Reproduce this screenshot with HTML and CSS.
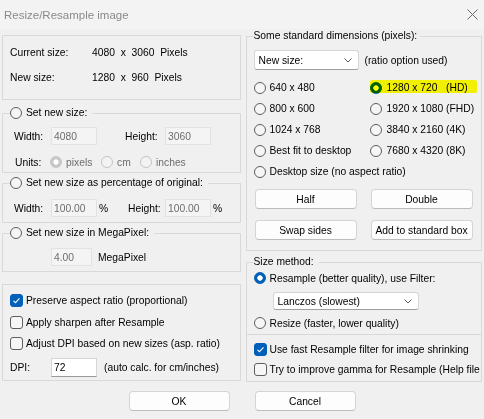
FILE: index.html
```html
<!DOCTYPE html>
<html lang="en">
<head>
    <meta charset="UTF-8">
    <title>Resize/Resample image</title>
    <link rel="stylesheet" href="styles.css">
</head>
<body>
    <div class="dialog">
        <div class="titlebar">
            <span class="title">Resize/Resample image</span>
            <svg class="close" width="11" height="11" viewBox="0 0 11 11">
                <path d="M0.5 0.5 L10.5 10.5 M10.5 0.5 L0.5 10.5" stroke="#6b6b6b" stroke-width="1" fill="none"/>
            </svg>
        </div>

        <div class="content">
            <div class="col-left">
                <div class="panel info">
                    <div class="info-row"><span class="info-label">Current size:</span><span class="info-value">4080  x  3060  Pixels</span></div>
                    <div class="info-row"><span class="info-label">New size:</span><span class="info-value">1280  x  960  Pixels</span></div>
                </div>

                <fieldset class="group g-size">
                    <legend><span class="opt"><span class="radio"></span>Set new size:</span></legend>
                    <div class="row field-row">
                        <span class="lbl w-37">Width:</span>
                        <input class="field" type="text" value="4080" disabled>
                        <span class="lbl ml-28 w-40">Height:</span>
                        <input class="field" type="text" value="3060" disabled>
                    </div>
                    <div class="row units-row">
                        <span class="lbl w-35">Units:</span>
                        <span class="opt dis w-51"><span class="radio dis-on"></span>pixels</span>
                        <span class="opt dis w-39"><span class="radio dis"></span>cm</span>
                        <span class="opt dis"><span class="radio dis"></span>inches</span>
                    </div>
                </fieldset>

                <fieldset class="group g-percent">
                    <legend><span class="opt"><span class="radio"></span>Set new size as percentage of original:</span></legend>
                    <div class="row field-row">
                        <span class="lbl w-37">Width:</span>
                        <input class="field" type="text" value="100.00" disabled>
                        <span class="lbl unit">%</span>
                        <span class="lbl w-37">Height:</span>
                        <input class="field" type="text" value="100.00" disabled>
                        <span class="lbl pct">%</span>
                    </div>
                </fieldset>

                <fieldset class="group g-mega">
                    <legend><span class="opt"><span class="radio"></span>Set new size in MegaPixel:</span></legend>
                    <div class="row mega-row">
                        <input class="field short" type="text" value="4.00" disabled>
                        <span class="lbl">MegaPixel</span>
                    </div>
                </fieldset>

                <div class="panel options">
                    <div class="row check-row"><span class="check on"><svg width="11" height="11" viewBox="0 0 11 11"><path d="M2.5 5.8 L4.5 7.7 L8.5 3.4" stroke="#fff" stroke-width="1.1" fill="none"/></svg></span>Preserve aspect ratio (proportional)</div>
                    <div class="row check-row"><span class="check"></span>Apply sharpen after Resample</div>
                    <div class="row check-row"><span class="check"></span>Adjust DPI based on new sizes (asp. ratio)</div>
                    <div class="row dpi-row">
                        <span class="lbl w-41">DPI:</span>
                        <input class="field live" type="text" value="72">
                        <span class="lbl hint">(auto calc. for cm/inches)</span>
                    </div>
                </div>
            </div>

            <div class="col-right">
                <fieldset class="group g-std">
                    <legend>Some standard dimensions (pixels):</legend>
                    <div class="row select-row">
                        <div class="select new-size">New size:<svg width="8" height="5" viewBox="0 0 8 5"><path d="M0.5 0.5 L4 4 L7.5 0.5" stroke="#5a5a5a" fill="none"/></svg></div>
                        <span class="lbl">(ratio option used)</span>
                    </div>
                    <div class="dims">
                        <span class="opt"><span class="radio"></span>640 x 480</span>
                        <span class="opt col2 marked"><span class="radio on"></span>1280 x 720 &nbsp; (HD)<span class="marker"></span></span>
                        <span class="opt"><span class="radio"></span>800 x 600</span>
                        <span class="opt col2"><span class="radio"></span>1920 x 1080 (FHD)</span>
                        <span class="opt"><span class="radio"></span>1024 x 768</span>
                        <span class="opt col2"><span class="radio"></span>3840 x 2160 (4K)</span>
                        <span class="opt"><span class="radio"></span>Best fit to desktop</span>
                        <span class="opt col2"><span class="radio"></span>7680 x 4320 (8K)</span>
                        <span class="opt wide"><span class="radio"></span>Desktop size (no aspect ratio)</span>
                    </div>
                    <div class="btn-grid">
                        <button class="btn">Half</button>
                        <button class="btn">Double</button>
                        <button class="btn">Swap sides</button>
                        <button class="btn">Add to standard box</button>
                    </div>
                </fieldset>

                <fieldset class="group g-method">
                    <legend>Size method:</legend>
                    <div class="row method-row"><span class="opt"><span class="radio on"></span>Resample (better quality), use Filter:</span></div>
                    <div class="select filter">Lanczos (slowest)<svg width="8" height="5" viewBox="0 0 8 5"><path d="M0.5 0.5 L4 4 L7.5 0.5" stroke="#5a5a5a" fill="none"/></svg></div>
                    <div class="row method-row resize"><span class="opt"><span class="radio"></span>Resize (faster, lower quality)</span></div>
                    <div class="separator"></div>
                    <div class="row check-row fast"><span class="check on"><svg width="11" height="11" viewBox="0 0 11 11"><path d="M2.5 5.8 L4.5 7.7 L8.5 3.4" stroke="#fff" stroke-width="1.1" fill="none"/></svg></span>Use fast Resample filter for image shrinking</div>
                    <div class="row check-row gamma"><span class="check"></span>Try to improve gamma for Resample (Help file</div>
                </fieldset>
            </div>
        </div>

        <div class="actions">
            <button class="btn action">OK</button>
            <button class="btn action">Cancel</button>
        </div>
    </div>
</body>
</html>
```

FILE: styles.css
```css
body {
    margin: 0;
    background-color: #f0f0f0;
    font-family: "Liberation Sans", Arial, sans-serif;
    font-size: 10.3px;
    color: #000;
    overflow: hidden;
}

.dialog {
    width: 484px;
    height: 419px;
    display: flex;
    flex-direction: column;
}

.titlebar {
    height: 29px;
    flex: none;
    display: flex;
    align-items: center;
    justify-content: space-between;
    padding: 0 6px 0 4px;
    background-color: #f3f3f3;
}

.title {
    color: #8a8a8a;
    font-size: 11.5px;
}

.content {
    display: flex;
    gap: 5px;
    padding: 0 2px;
}

.col-left {
    width: 239px;
    display: flex;
    flex-direction: column;
}

.col-right {
    width: 237px;
    display: flex;
    flex-direction: column;
}

/* boxes and group boxes */
.panel {
    border: 1px solid #d9d9d9;
}

.group {
    border: 1px solid #d9d9d9;
    margin: 0;
    padding: 0 0 0 7px;
    min-width: 0;
}

.group legend {
    padding: 0 5px 0 0;
    height: 16px;
    line-height: 16px;
}

.row {
    display: flex;
    align-items: center;
    height: 16px;
}

.lbl {
    flex: none;
    white-space: nowrap;
}

.opt {
    display: inline-flex;
    align-items: center;
    gap: 4px;
    white-space: nowrap;
}

.opt.dis {
    color: #6d6d6d;
}

/* info box */
.info {
    margin-top: 6px;
    padding: 8px 0 14px 7px;
    display: flex;
    flex-direction: column;
    gap: 9px;
}

.info-row {
    display: flex;
    height: 16px;
    align-items: center;
}

.info-label {
    width: 82px;
}

.info-value {
    white-space: pre;
}

/* left groups */
.g-size {
    margin-top: 5px;
    padding-top: 6px;
    padding-bottom: 2px;
}

.g-percent {
    margin-top: 2px;
    padding-top: 8px;
    padding-bottom: 5px;
}

.g-mega {
    margin-top: 2px;
    padding-top: 7px;
    padding-bottom: 5px;
}

.field-row {
    height: 18px;
    padding-left: 4px;
}

.units-row {
    margin-top: 9px;
    padding-left: 5px;
}

.mega-row {
    height: 18px;
    padding-left: 41px;
    gap: 6px;
}

.w-35 { width: 35px; }
.w-37 { width: 37px; }
.w-39 { width: 39px; }
.w-40 { width: 40px; }
.w-41 { width: 41px; }
.w-51 { width: 51px; }
.ml-28 { margin-left: 28px; }

.unit {
    margin-left: 2px;
    width: 29px;
}

.pct {
    margin-left: 2px;
}

.field {
    width: 46px;
    height: 18px;
    box-sizing: border-box;
    margin: 0;
    padding: 0 2px;
    border: 1px solid #e2e2e2;
    background-color: #f4f4f4;
    color: #6d6d6d;
    font: inherit;
    flex: none;
}

.field.short {
    width: 41px;
}

.field.live {
    height: 19px;
    background-color: #fff;
    color: #000;
    border-color: #d6d6d6;
    border-bottom-color: #9a9a9a;
}

/* radios and checks */
.radio {
    width: 12px;
    height: 12px;
    box-sizing: border-box;
    border-radius: 50%;
    border: 1px solid #5e5e5e;
    background-color: #f6f6f6;
    flex: none;
}

.radio.on {
    border-color: #005fb8;
    background: radial-gradient(circle, #fff 0 2.4px, #005fb8 3px);
}

.radio.dis {
    border-color: #c4c4c4;
    background-color: #f3f3f3;
}

.radio.dis-on {
    border-color: #c6c6c6;
    background: radial-gradient(circle, #fff 0 2.4px, #c6c6c6 3px);
}

.check {
    width: 13px;
    height: 13px;
    box-sizing: border-box;
    border: 1px solid #5e5e5e;
    border-radius: 3px;
    background-color: #f6f6f6;
    margin-right: 3px;
    display: flex;
    align-items: center;
    justify-content: center;
    flex: none;
}

.check.on {
    background-color: #005fb8;
    border-color: #005fb8;
}

/* bottom left options */
.options {
    margin-top: 12px;
    padding: 7px 0 3px 7px;
}

.options .check-row + .check-row {
    margin-top: 6px;
}

.options .check-row:nth-child(3) {
    margin-top: 5px;
}

.dpi-row {
    height: 19px;
    margin-top: 7px;
}

.hint {
    margin-left: 7px;
}

/* standard dimensions */
.g-std {
    padding-bottom: 10px;
}

.g-std legend {
    height: 14px;
    line-height: 14px;
    padding: 0 3px 0 0;
}

.select-row {
    height: 20px;
    margin-top: 7px;
    gap: 6px;
}

.select {
    height: 20px;
    box-sizing: border-box;
    border: 1px solid #d6d6d6;
    border-bottom-color: #a0a0a0;
    border-radius: 3px;
    background-color: #fff;
    display: flex;
    align-items: center;
    justify-content: space-between;
    padding: 0 6px 0 4px;
    flex: none;
}

.new-size {
    width: 105px;
}

.dims {
    display: grid;
    grid-template-columns: 116px 1fr;
    grid-auto-rows: 21px;
    margin-top: 7px;
}

.dims .opt.col2 {
    gap: 5px;
}

.dims .wide {
    grid-column: 1 / 3;
}

.marked {
    position: relative;
}

.marker {
    position: absolute;
    left: 0;
    top: 3px;
    width: 107px;
    height: 13px;
    background-color: #ffff00;
    mix-blend-mode: multiply;
    border-radius: 2px;
}

.btn-grid {
    display: grid;
    grid-template-columns: 102px 102px;
    column-gap: 14px;
    row-gap: 11px;
    margin-top: 7px;
    padding-left: 1px;
}

.btn {
    height: 20px;
    margin: 0;
    padding: 0;
    border: 1px solid #d4d4d4;
    border-bottom-color: #bcbcbc;
    border-radius: 4px;
    background-color: #fdfdfd;
    font: inherit;
    color: #000;
}

/* size method */
.g-method {
    margin-top: 3px;
    padding-bottom: 4px;
}

.filter {
    width: 146px;
    height: 18px;
    margin: 6px 0 0 19px;
}

.resize {
    margin-top: 5px;
}

.separator {
    height: 1px;
    margin: 3px 0 0 -7px;
    background-color: #d9d9d9;
}

.fast {
    margin-top: 6px;
}

.gamma {
    margin-top: 4px;
}

.g-method .check-row {
    white-space: nowrap;
}

/* dialog buttons */
.actions {
    display: flex;
    justify-content: center;
    gap: 25px;
    margin-top: 9px;
}

.btn.action {
    width: 101px;
}
```
